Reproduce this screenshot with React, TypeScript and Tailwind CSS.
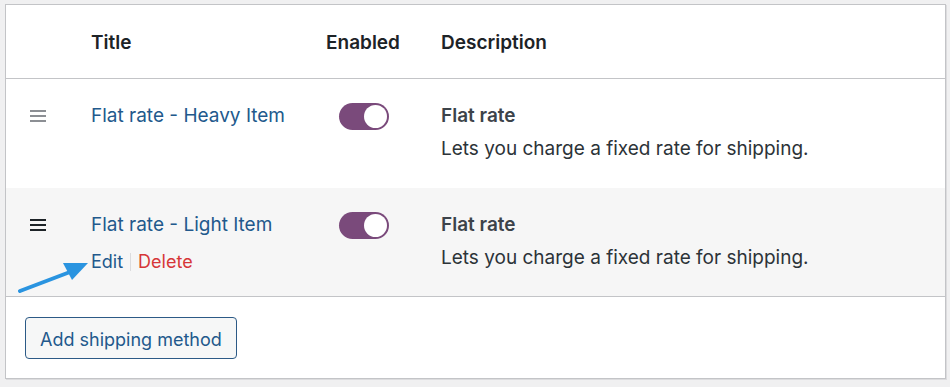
import React from 'react';

const Handle: React.FC<{ dark?: boolean }> = ({ dark }) => (
    <svg width="16" height="12" viewBox="0 0 16 12" className="block">
        <g fill={dark ? '#1d2327' : '#8c8f94'}>
            <rect x="0" y="0" width="16" height="2" />
            <rect x="0" y="5" width="16" height="2" />
            <rect x="0" y="10" width="16" height="2" />
        </g>
    </svg>
);

const Toggle: React.FC = () => (
    <div className="w-[50px] h-[27px] rounded-full bg-[#7a4a7b] flex items-center justify-end pr-[2px]">
        <div className="w-[23px] h-[23px] rounded-full bg-white" />
    </div>
);

const Arrow: React.FC = () => (
    <svg width="80" height="40" viewBox="0 0 80 40" className="absolute left-[14px] top-[253px]">
        <line x1="6" y1="38" x2="56" y2="19" stroke="#2a94e0" strokeWidth="4" strokeLinecap="round" />
        <polygon points="74,10 49,10 58,27" fill="#2a94e0" />
    </svg>
);

type Method = { title: string; hover?: boolean };

const methods: Method[] = [
    { title: 'Flat rate - Heavy Item' },
    { title: 'Flat rate - Light Item', hover: true },
];

export default function App() {
    return (
        <div className="w-[950px] h-[387px] bg-[#f0f0f1] pt-[4px] pl-[5px] font-['Inter','Noto_Sans',sans-serif] text-[19px] text-[#32373c] relative">
            <div className="w-[941px] bg-white border border-[#c3c4c7] shadow-[1px_1px_0_#dcdcde]">
                <div className="grid grid-cols-[69px_235px_115px_1fr] h-[74px] pt-[3px] items-center border-b border-[#c3c4c7] font-semibold text-[#1d2327]">
                    <div />
                    <div className="pl-[16px]">Title</div>
                    <div className="pl-[16px]">Enabled</div>
                    <div className="pl-[16px]">Description</div>
                </div>

                {methods.map((m) => (
                    <div
                        key={m.title}
                        className={
                            'grid grid-cols-[69px_235px_115px_1fr] h-[109px] pt-[22px] ' +
                            (m.hover ? 'bg-[#f6f6f6] border-b border-[#c3c4c7]' : 'bg-white')
                        }
                    >
                        <div className="pl-[24px] pt-[9px]">
                            <Handle dark={m.hover} />
                        </div>
                        <div className="pl-[16px]">
                            <div className="text-[#22598c] leading-[29px]">{m.title}</div>
                            {m.hover && (
                                <div className="flex items-center mt-[8px] leading-[29px] text-[18px]">
                                    <span className="text-[#22598c]">Edit</span>
                                    <span className="w-px h-[18px] bg-[#dcdcde] mx-[7px]" />
                                    <span className="text-[#d63638]">Delete</span>
                                </div>
                            )}
                        </div>
                        <div className="pl-[29px] pt-[2px]">
                            <Toggle />
                        </div>
                        <div className="pl-[16px] leading-[29px]">
                            <div className="font-semibold text-[#3c434a]">Flat rate</div>
                            <div className="mt-[4px] text-[#2c3338]">Lets you charge a fixed rate for shipping.</div>
                        </div>
                    </div>
                ))}

                <div className="h-[81px] pl-[19px] pt-[20px]">
                    <button className="h-[42px] pt-[2px] px-[14px] rounded-[4px] border border-[#2c5a86] bg-[#f6f7f7] text-[18px] text-[#22598c]">
                        Add shipping method
                    </button>
                </div>
            </div>
            <Arrow />
        </div>
    );
}
